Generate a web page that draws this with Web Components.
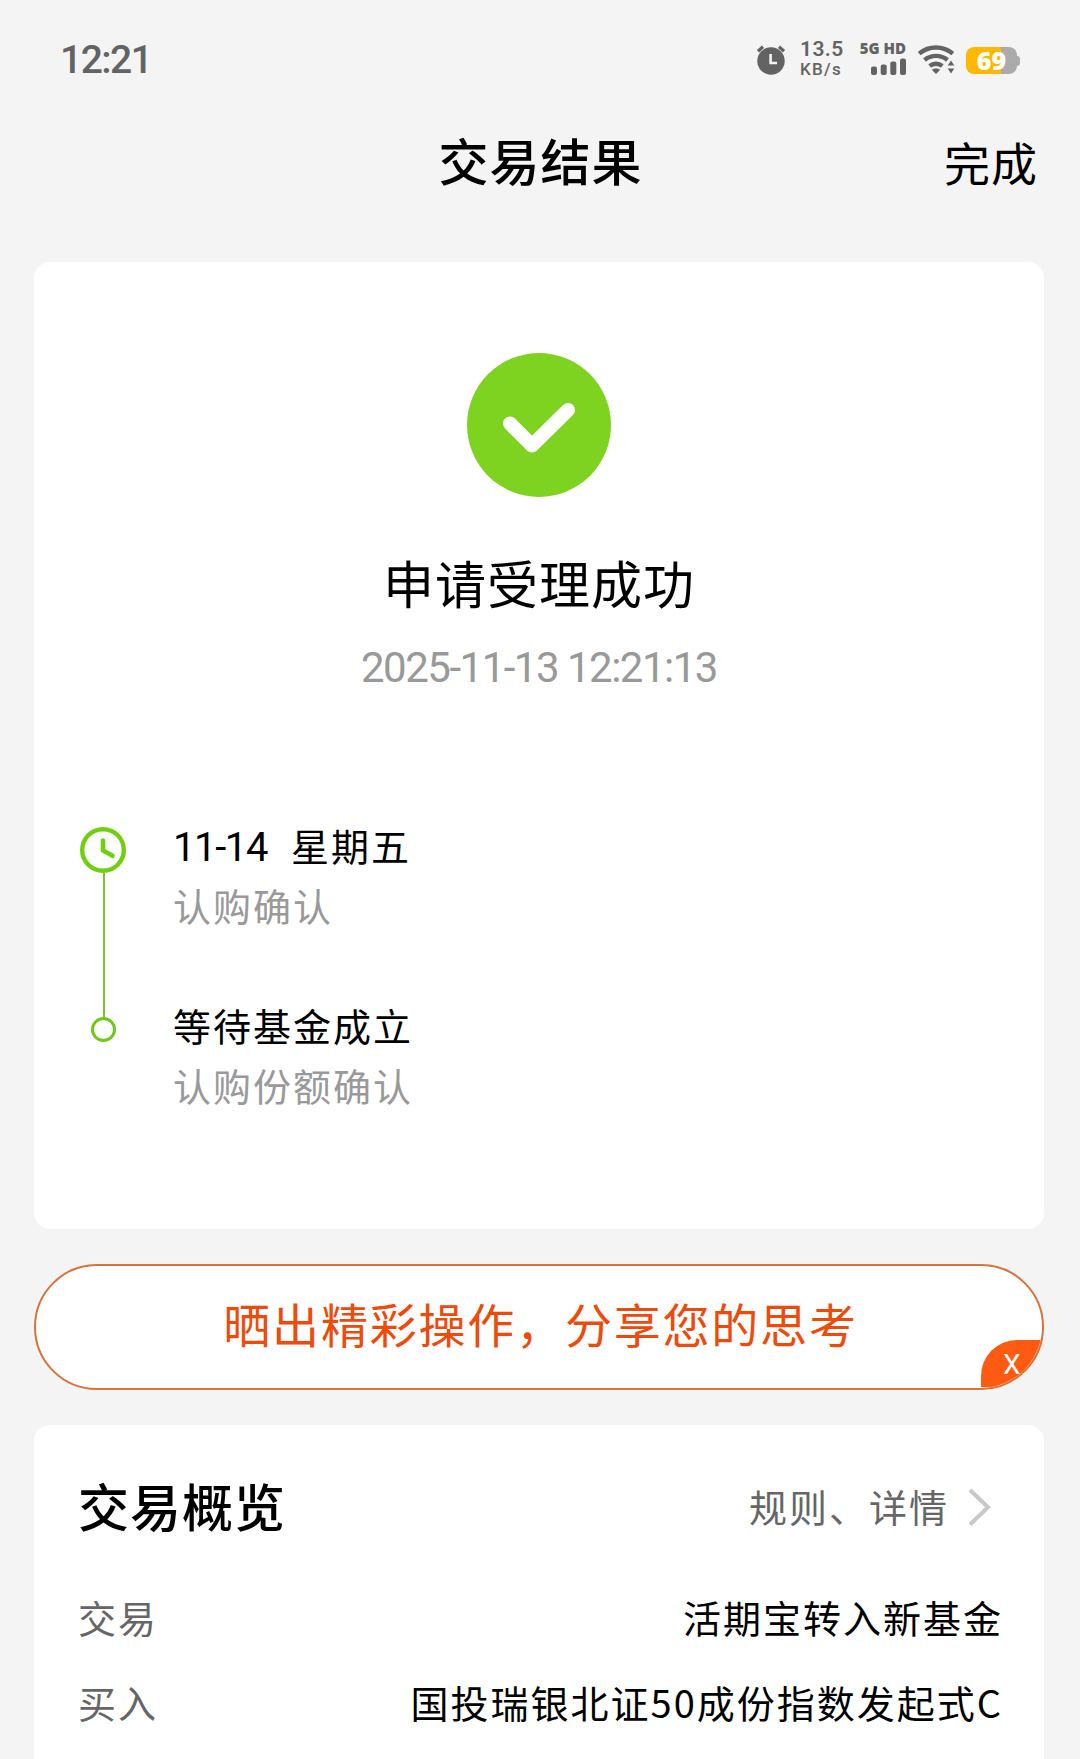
<!DOCTYPE html>
<html lang="zh-CN">
<head>
<meta charset="utf-8">
<title>交易结果</title>
<style>
    html, body {
        margin: 0;
        height: 1759px;
        overflow: hidden;
        background: #F4F4F4;
        color: #000000;
        font-family: "Noto Sans CJK SC", "Noto Sans", sans-serif;
    }
</style>
</head>
<body>
<result-page></result-page>

<script>
const define = (name, html, setup) => {
    const template = document.createElement('template')
    template.innerHTML = html

    customElements.define(name, class extends HTMLElement {
        constructor () {
            super()
            this.attachShadow({ mode: 'open' })
            this.shadowRoot.appendChild(template.content.cloneNode(true))
        }

        connectedCallback () {
            if (setup) {
                setup(this, this.shadowRoot)
            }
        }
    })
}

define('battery-level', `
    <style>
        :host {
            display: flex;
            align-items: center;
        }

        .body {
            display: flex;
            align-items: center;
            justify-content: center;
            width: 51px;
            height: 27px;
            border-radius: 8px;
            background: linear-gradient(90deg, #FFB800 35px, #ABABAB 35px);
            color: #FFFFFF;
            font: 800 25px/27px "Open Sans", "Noto Sans", sans-serif;
        }

        .cap {
            width: 3px;
            height: 10px;
            border-radius: 0 4px 4px 0;
            background: #ABABAB;
        }
    </style>
    <div class="body"><slot></slot></div>
    <div class="cap"></div>
`)

define('status-bar', `
    <style>
        :host {
            display: flex;
            align-items: flex-start;
            justify-content: space-between;
            box-sizing: border-box;
            height: 100px;
            padding: 38px 60px 0 60px;
            color: #636363;
            font-family: Roboto, "Noto Sans", sans-serif;
        }

        .time {
            margin-top: 1px;
            font-size: 39px;
            font-weight: 500;
            line-height: 42px;
            letter-spacing: -1.5px;
        }

        .icons {
            display: flex;
            align-items: flex-start;
        }

        .alarm {
            margin: 6px 14px 0 0;
        }

        .speed {
            width: 45px;
            margin: 1px 13px 0 0;
            font-size: 21px;
            font-weight: 600;
            line-height: 21px;
            letter-spacing: .4px;
        }

        .speed div + div {
            margin-top: 1px;
            font-size: 17px;
            font-weight: 500;
            line-height: 17px;
            letter-spacing: 1.3px;
        }

        .signal {
            display: flex;
            flex-direction: column;
            align-items: flex-end;
            width: 48px;
            margin: 3px 12px 0 0;
            font: 800 15px/15px "Open Sans", "Noto Sans", sans-serif;
            white-space: nowrap;
        }

        .bars {
            margin-top: 2px;
        }

        .wifi {
            margin: 6px 11px 0 0;
        }

        battery-level {
            margin-top: 9px;
        }

        svg {
            display: block;
        }
    </style>
    <div class="time">12:21</div>
    <div class="icons">
        <svg class="alarm" width="30" height="32" viewBox="0 0 30 32">
            <circle cx="15" cy="17" r="13.7" fill="#636363"/>
            <path d="M2 7.3L7 2.7M28 7.3L23 2.7" stroke="#636363" stroke-width="3.2" fill="none"/>
            <path d="M14.6 10V19H21" stroke="#F4F4F4" stroke-width="2.6" fill="none"/>
        </svg>
        <div class="speed"><div>13.5</div><div>KB/s</div></div>
        <div class="signal">
            <div>5G HD</div>
            <svg class="bars" width="36" height="17" viewBox="0 0 36 17" fill="#636363">
                <rect x="1" y="8.5" width="6" height="8.5" rx="2"/>
                <rect x="10.7" y="6.5" width="6" height="10.5" rx="2"/>
                <rect x="20.3" y="3.5" width="6" height="13.5" rx="2"/>
                <rect x="30" y="0.5" width="6" height="16.5" rx="2"/>
            </svg>
        </div>
        <svg class="wifi" width="37" height="31" viewBox="0 0 37 31">
            <path d="M1.2 9.6A26 26 0 0 1 34.8 9.6M6.5 16A18 18 0 0 1 29.5 16M11.7 22A10 10 0 0 1 24.3 22" fill="none" stroke="#636363" stroke-width="4.4"/>
            <path d="M13.8 25.8Q18 22.6 22.2 25.8L18 30Z" fill="#636363"/>
            <path d="M33 16.5L36.3 21.5H29.7ZM33 29.5L36.3 24.5H29.7Z" fill="#636363"/>
        </svg>
        <battery-level>69</battery-level>
    </div>
`)

define('nav-header', `
    <style>
        :host {
            display: grid;
            grid-template-columns: 1fr auto 1fr;
            align-items: center;
            height: 116px;
            padding: 0 42px 0 43px;
        }

        .title {
            grid-column: 2;
            padding-top: 2px;
            font-size: 50px;
            font-weight: 500;
            letter-spacing: 1px;
        }

        .action {
            justify-self: end;
            padding-top: 6px;
            font-size: 46px;
            letter-spacing: 1px;
        }
    </style>
    <div class="title"><slot></slot></div>
    <div class="action"><slot name="action"></slot></div>
`)

define('white-card', `
    <style>
        :host {
            display: flex;
            flex-direction: column;
            box-sizing: border-box;
            background: #FFFFFF;
            border-radius: 16px;
        }
    </style>
    <slot></slot>
`)

define('success-banner', `
    <style>
        :host {
            display: flex;
            flex-direction: column;
            align-items: center;
            padding-top: 91px;
        }

        .title {
            margin-top: 49px;
            font-size: 51px;
            line-height: 72px;
            letter-spacing: 1px;
        }

        .date {
            margin-top: 22px;
            color: #999999;
            font-family: Roboto, "Noto Sans", sans-serif;
            font-size: 42px;
            line-height: 56px;
            letter-spacing: -1.5px;
        }
    </style>
    <svg width="144" height="144" viewBox="0 0 144 144">
        <circle cx="72" cy="72" r="72" fill="#7ED321"/>
        <path d="M43 70.5L65 92.5L101 57" fill="none" stroke="#FFFFFF" stroke-width="14" stroke-linecap="round" stroke-linejoin="round"/>
    </svg>
    <div class="title"><slot></slot></div>
    <div class="date"><slot name="date"></slot></div>
`)

define('time-step', `
    <style>
        :host {
            display: flex;
            gap: 47px;
        }

        .marker {
            display: flex;
            flex-direction: column;
            align-items: center;
            width: 46px;
        }

        .clock {
            margin-top: 13px;
        }

        .line {
            flex: 1;
            width: 2px;
            margin-left: 2px;
            background: #7CC030;
        }

        .text {
            height: 119px;
            padding: 1px 0 60px;
            font-size: 38px;
            line-height: 60px;
            letter-spacing: 2px;
        }

        .note {
            color: #999999;
        }

        slot[name="day"]::slotted(*) {
            display: inline-block;
            width: 118px;
            font-family: Roboto, "Noto Sans", sans-serif;
            font-size: 40px;
            line-height: 40px;
            letter-spacing: -1.4px;
        }

        svg {
            display: block;
            flex: none;
        }

        .dot,
        :host([last]) .clock {
            display: none;
        }

        :host([last]) .dot {
            display: block;
            margin-left: 1px;
        }

        :host([last]) .line {
            flex: 0 0 23px;
        }

        :host([last]) .text {
            padding-bottom: 0;
        }
    </style>
    <div class="marker">
        <svg class="clock" width="46" height="46" viewBox="0 0 46 46" fill="none" stroke="#70D010">
            <circle cx="23" cy="23" r="20.8" stroke-width="4.4"/>
            <path d="M23 13.5V23.5L32.5 28.8" stroke-width="4.6" stroke-linecap="round" stroke-linejoin="round"/>
        </svg>
        <div class="line"></div>
        <svg class="dot" width="25" height="25" viewBox="0 0 25 25">
            <circle cx="12.5" cy="12.5" r="11" fill="none" stroke="#70C81C" stroke-width="3"/>
        </svg>
    </div>
    <div class="text">
        <div><slot name="day"></slot><slot></slot></div>
        <div class="note"><slot name="note"></slot></div>
    </div>
`)

define('time-line', `
    <style>
        :host {
            display: flex;
            flex-direction: column;
            margin: 118px 0 0 46px;
        }
    </style>
    <slot></slot>
`)

define('share-button', `
    <style>
        :host {
            display: flex;
            align-items: center;
            justify-content: center;
            position: relative;
            box-sizing: border-box;
            height: 126px;
            border: 2px solid #D8733A;
            border-radius: 63px;
            overflow: hidden;
            background: #FFFFFF;
            color: #F04A0A;
            font-size: 47px;
            line-height: 60px;
            letter-spacing: 1.8px;
        }

        .label {
            margin: -8px 0 0 3px;
        }

        .close {
            position: absolute;
            right: 0;
            bottom: 1px;
            box-sizing: border-box;
            width: 61px;
            height: 47px;
            padding-left: 22px;
            border-radius: 36px 0 0 0;
            background: #FF5A12;
            color: #FFFFFF;
            font-family: Roboto, "Noto Sans", sans-serif;
            font-size: 28px;
            line-height: 49px;
        }
    </style>
    <div class="label"><slot></slot></div>
    <div class="close">X</div>
`)

define('section-header', `
    <style>
        :host {
            display: flex;
            align-items: center;
            justify-content: space-between;
            height: 100px;
            margin: 30px 53px 19px 44px;
        }

        .title {
            font-size: 51px;
            font-weight: 500;
            letter-spacing: 1px;
        }

        .link {
            display: flex;
            align-items: center;
            gap: 18px;
            color: #666666;
            font-size: 38px;
            letter-spacing: 2px;
        }

        svg {
            margin-top: 3px;
        }
    </style>
    <div class="title"><slot></slot></div>
    <div class="link">
        <slot name="link"></slot>
        <svg width="24" height="38" viewBox="0 0 24 38">
            <path d="M3 2L21 19.3L3 36.5" fill="none" stroke="#C8C8C8" stroke-width="4"/>
        </svg>
    </div>
`)

define('info-row', `
    <style>
        :host {
            display: flex;
            align-items: center;
            justify-content: space-between;
            height: 85px;
            padding: 0 41px 0 44px;
            font-size: 38px;
            letter-spacing: 2px;
        }

        .label {
            color: #666666;
        }
    </style>
    <div class="label"></div>
    <div class="value"><slot></slot></div>
`, (host, root) => {
    root.querySelector('.label').textContent = host.getAttribute('label')
})

define('result-page', `
    <style>
        :host {
            display: block;
        }

        main {
            display: flex;
            flex-direction: column;
            gap: 35px;
            padding: 46px 36px 0 34px;
        }

        .result {
            height: 967px;
        }

        .overview {
            height: 400px;
        }
    </style>
    <status-bar></status-bar>
    <nav-header>交易结果<span slot="action">完成</span></nav-header>
    <main>
        <white-card class="result">
            <success-banner>申请受理成功<span slot="date">2025-11-13 12:21:13</span></success-banner>
            <time-line>
                <time-step><span slot="day">11-14</span>星期五<span slot="note">认购确认</span></time-step>
                <time-step last>等待基金成立<span slot="note">认购份额确认</span></time-step>
            </time-line>
        </white-card>
        <share-button>晒出精彩操作，分享您的思考</share-button>
        <white-card class="overview">
            <section-header>交易概览<span slot="link">规则、详情</span></section-header>
            <info-row label="交易">活期宝转入新基金</info-row>
            <info-row label="买入">国投瑞银北证50成份指数发起式C</info-row>
        </white-card>
    </main>
`)
</script>
</body>
</html>
